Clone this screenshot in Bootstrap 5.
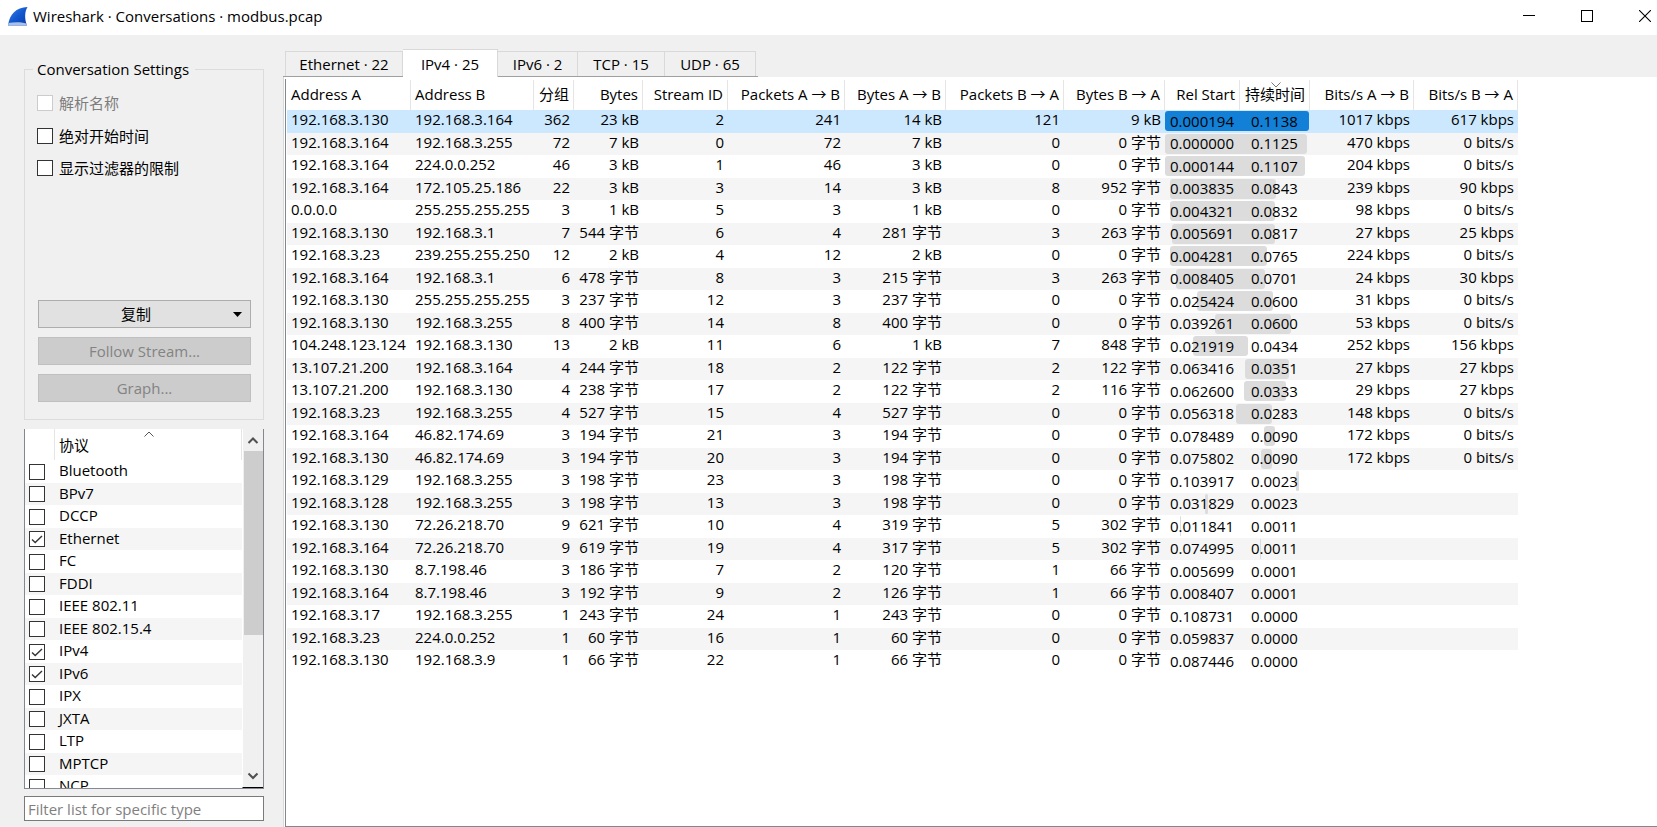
<!DOCTYPE html>
<html lang="zh-CN">
<head>
<meta charset="utf-8">
<meta name="viewport" content="width=device-width, initial-scale=1">
<title>Wireshark · Conversations · modbus.pcap</title>
<link href="https://cdn.jsdelivr.net/npm/bootstrap@5.3.0/dist/css/bootstrap.min.css" rel="stylesheet">
<style>
  body { font: 15px/20px "Open Sans", "Noto Sans CJK SC", sans-serif; color: #000; background: #f0f0f0; }

  /* title bar */
  .titlebar { height: 35px; padding-left: 8px; background: #fff; }
  .titlebar-text { margin-left: 5px; padding-bottom: 4px; }
  .win-btn { width: 24px; height: 24px; line-height: 0; border: 0; padding: 0; background: none; }
  .win-btns { gap: 34px; }

  /* sidebar */
  .main-area { min-height: 0; }
  .sidebar { width: 240px; margin: 22px 19px 6px 24px; }
  .settings { border: 1px solid #dcdcdc; padding: 0 12px 17px; }
  .settings legend { float: none; width: auto; margin: 0 0 0 -4px; padding: 0 6px 0 4px; font-size: 15px; line-height: 24px; }
  .settings-body { min-height: 321px; padding-top: 12px; }
  .settings label { height: 20px; margin-bottom: 12px; gap: 6px; }
  .settings label.off { color: #7d7d7d; margin-bottom: 13px; }
  .tick.form-check-input { width: 16px; height: 16px; margin: 0; border: 1px solid #333; border-radius: 0; background-color: #fff; display: block; flex: none; box-shadow: none; }
  .tick.form-check-input:checked { background-color: #fff; background-image: url("data:image/svg+xml,%3Csvg xmlns='http://www.w3.org/2000/svg' viewBox='0 0 14 14'%3E%3Cpath d='M2 7.5l3.2 3L12 4' fill='none' stroke='%23333' stroke-width='1.4'/%3E%3C/svg%3E"); }
  .tick.form-check-input:disabled { border-color: #ccc; opacity: 1; }
  .btn-flat { --bs-btn-font-size: 15px; --bs-btn-line-height: 20px; --bs-btn-padding-y: 3px; --bs-btn-border-radius: 0; --bs-btn-border-color: #adadad; --bs-btn-bg: #e1e1e1; --bs-btn-color: #000; --bs-btn-disabled-bg: #ccc; --bs-btn-disabled-border-color: #bfbfbf; --bs-btn-disabled-color: #838383; --bs-btn-disabled-opacity: 1; margin-left: 1px; width: 213px; }
  .btn-stack { gap: 9px; }

  /* protocol list */
  .protocols { margin-top: 9px; background: #fff; border: 1px solid #828790; border-top: 0; flex: 1 1 0; min-height: 0; }
  .proto-view { overflow: hidden; }
  .proto-table { width: 100%; border-collapse: separate; border-spacing: 0; }
  .proto-table th { height: 31px; padding: 6px 0 0 4px; font-weight: 400; vertical-align: top; border-right: 1px solid #e5e5e5; position: relative; }
  .proto-table td { padding: 0 0 0 4px; height: 22px; vertical-align: top; }
  .proto-table td:first-child { padding-top: 3px; width: 30px; }
  .proto-table tr:nth-child(odd) td { height: 23px; }
  .proto-table tr:nth-child(odd) td:first-child { padding-top: 4px; }
  .proto-table label { display: block; line-height: 20px; }
  .proto-table tbody tr:nth-child(even) { background: #f5f5f5; }
  .sort-mark { position: absolute; left: 50%; margin-left: -4px; top: 2px; }
  .vbar { width: 21px; padding-left: 1px; border-left: 1px solid #fff; border-bottom: 1px solid #000; background: #f0f0f0; }
  .vbar svg { display: block; }
  .vbar-thumb { height: 184px; background: #cdcdcd; }
  .filter-box.form-control { height: 25px; margin-top: 7px; padding: 0 3px; font-size: 15px; line-height: 20px; border: 1px solid #7a7a7a; border-radius: 0; color: #000; }
  .filter-box::placeholder { color: #7f7f7f; }

  /* tabs */
  .conv { margin-top: 14px; }
  .conv-tabs { display: grid; grid-template-columns: 118px 95px 80px 87px 91px; align-items: end; width: max-content; padding: 0 2px; border-bottom: 1px solid #a0a0a0; }
  .conv-tabs .nav-link { width: 100%; height: 25px; padding: 0; line-height: 24px; color: #000; border: 1px solid #d9d9d9; border-width: 1px 1px 0 0; border-radius: 0; background: #f0f0f0; margin: 0; }
  .conv-tabs li:first-child .nav-link { border-left-width: 1px; }
  .conv-tabs .nav-link.active { height: 28px; margin-bottom: -1px; color: #000; background: #fff; border-color: #d9d9d9; position: relative; }

  /* conversation table */
  .pane { background: #fff; border-left: 1px solid #d9d9d9; padding: 2px 0 0 1px; }
  .pane-view { border: 1px solid #828790; border-width: 0 0 1px 1px; padding: 1px 0 0 1px; overflow: hidden; }
  .conv-table { width: 1231px; table-layout: fixed; border-collapse: separate; border-spacing: 0; white-space: nowrap; }
  .conv-table th { height: 30px; padding: 0 4px 0 0; font-weight: 400; line-height: 28px; vertical-align: top; text-align: right; border-right: 1px solid #e5e5e5; position: relative; }
  .conv-table td { height: 22px; padding: 0 4px 0 0; line-height: 19px; vertical-align: top; text-align: right; }
  .conv-table tr:nth-child(odd) td { height: 23px; }
  .conv-table th:nth-child(-n+2), .conv-table td:nth-child(-n+2) { text-align: left; padding: 0 0 0 4px; }
  .conv-table tbody tr:nth-child(even) { background: #f5f5f5; }
  .conv-table tbody tr.chosen { background: #cce8ff; }
  .conv-table td.t-start, .conv-table td.t-span { position: relative; line-height: 20px; text-align: left; padding: 0 0 0 5px; }
  .conv-table tr:nth-child(odd) td.t-start, .conv-table tr:nth-child(odd) td.t-span { line-height: 22px; }
  .conv-table td.t-span { padding-left: 11px; }
  .t-num { position: relative; z-index: 2; }
  .span-bar { position: absolute; z-index: 1; top: 1px; height: 20px; border-radius: 3px; background: #dcdcdc; }
  .chosen .span-bar { background: #1380d8; }
</style>
</head>
<body>
<div class="vh-100 d-flex flex-column overflow-hidden">
  <header class="titlebar d-flex align-items-center flex-shrink-0">
    <svg width="20" height="20" viewBox="0 0 20 20" class="mb-1" aria-hidden="true">
      <defs><linearGradient id="fin" x1="0" y1="0" x2="1" y2="1"><stop offset="0" stop-color="#3b86e8"/><stop offset=".5" stop-color="#1258cf"/><stop offset="1" stop-color="#0a3ba6"/></linearGradient></defs>
      <path d="M0 19.500C1.500 8 8 1.500 19.500 1C16.500 6 16.500 13 19 19.500Z" fill="url(#fin)"/>
      <path d="M0 19.500L.6 17C6 15.800 13 15.800 18.400 17.500L19 19.500Z" fill="#a9c1ea"/>
    </svg>
    <span class="titlebar-text me-auto">Wireshark · Conversations · modbus.pcap</span>
    <div class="win-btns d-flex pb-1">
      <button class="win-btn" type="button" aria-label="Minimize"><svg width="12" height="12"><path d="M0 5.500H12" stroke="#000"/></svg></button>
      <button class="win-btn" type="button" aria-label="Maximize"><svg width="12" height="12"><rect x=".5" y=".5" width="11" height="11" fill="none" stroke="#000"/></svg></button>
      <button class="win-btn" type="button" aria-label="Close"><svg width="12" height="12"><path d="M0 0L12 12M12 0L0 12" stroke="#000" stroke-width="1.100"/></svg></button>
    </div>
  </header>

  <main class="main-area d-flex flex-grow-1">
    <aside class="sidebar d-flex flex-column flex-shrink-0">
      <fieldset class="settings">
        <legend>Conversation Settings</legend>
        <div class="settings-body d-flex flex-column">
          <label class="off d-flex align-items-center"><input class="tick form-check-input" type="checkbox" disabled>解析名称</label>
          <label class="d-flex align-items-center"><input class="tick form-check-input" type="checkbox">绝对开始时间</label>
          <label class="d-flex align-items-center"><input class="tick form-check-input" type="checkbox">显示过滤器的限制</label>
          <div class="btn-stack d-flex flex-column mt-auto">
            <button type="button" class="btn btn-flat d-flex align-items-center px-2"><span class="flex-grow-1 pe-2">复制</span><svg width="9" height="5"><path d="M0 0H9L4.500 5Z"/></svg></button>
            <button type="button" class="btn btn-flat" disabled>Follow Stream...</button>
            <button type="button" class="btn btn-flat" disabled>Graph...</button>
          </div>
        </div>
      </fieldset>

      <div class="protocols d-flex">
        <div class="proto-view flex-grow-1">
          <table class="proto-table">
            <thead><tr><th></th><th>协议<svg class="sort-mark" width="10" height="6"><path d="M.5 5.500L5 1L9.500 5.500" fill="none" stroke="#555"/></svg></th></tr></thead>
            <tbody id="protoRows"></tbody>
          </table>
        </div>
        <div class="vbar d-flex flex-column flex-shrink-0" aria-hidden="true">
          <svg width="19" height="22"><path d="M4.500 14L9 9.500L13.500 14" fill="none" stroke="#505050" stroke-width="2"/></svg>
          <div class="vbar-thumb"></div>
          <svg class="mt-auto" width="19" height="18"><path d="M4.500 4.500L9 9L13.500 4.500" fill="none" stroke="#505050" stroke-width="2"/></svg>
        </div>
      </div>
      <input class="filter-box form-control flex-shrink-0" type="text" aria-label="Filter protocols" placeholder="Filter list for specific type">
    </aside>

    <section class="conv d-flex flex-column flex-grow-1 overflow-hidden">
      <ul class="conv-tabs nav flex-shrink-0" role="tablist">
        <li role="presentation"><button class="nav-link" type="button" role="tab">Ethernet · 22</button></li>
        <li role="presentation"><button class="nav-link active" type="button" role="tab" aria-selected="true">IPv4 · 25</button></li>
        <li role="presentation"><button class="nav-link" type="button" role="tab">IPv6 · 2</button></li>
        <li role="presentation"><button class="nav-link" type="button" role="tab">TCP · 15</button></li>
        <li role="presentation"><button class="nav-link" type="button" role="tab">UDP · 65</button></li>
      </ul>
      <div class="pane d-flex flex-grow-1 overflow-hidden">
        <div class="pane-view flex-grow-1">
          <table class="conv-table">
            <colgroup>
              <col width="124"><col width="123"><col width="40"><col width="69"><col width="85"><col width="117"><col width="101">
              <col width="118"><col width="101"><col width="75"><col width="70"><col width="104"><col width="104">
            </colgroup>
            <thead>
              <tr>
                <th>Address A</th><th>Address B</th><th>分组</th><th>Bytes</th><th>Stream ID</th>
                <th>Packets A → B</th><th>Bytes A → B</th><th>Packets B → A</th><th>Bytes B → A</th>
                <th>Rel Start</th><th>持续时间<svg class="sort-mark" width="10" height="6"><path d="M.5 .5L5 5L9.500 .5" fill="none" stroke="#777"/></svg></th>
                <th>Bits/s A → B</th><th>Bits/s B → A</th>
              </tr>
            </thead>
            <tbody id="convRows"></tbody>
          </table>
        </div>
      </div>
    </section>
  </main>
</div>

<script src="https://cdn.jsdelivr.net/npm/bootstrap@5.3.0/dist/js/bootstrap.bundle.min.js"></script>
<script>
  const protocols = ['Bluetooth', 'BPv7', 'DCCP', 'Ethernet', 'FC', 'FDDI', 'IEEE 802.11', 'IEEE 802.15.4', 'IPv4', 'IPv6', 'IPX', 'JXTA', 'LTP', 'MPTCP', 'NCP'];
  const enabled = ['Ethernet', 'IPv4', 'IPv6'];
  document.getElementById('protoRows').innerHTML = protocols.map((p, i) =>
    `<tr><td><input class="tick form-check-input" type="checkbox" id="p${i}"${enabled.includes(p) ? ' checked' : ''}></td><td><label for="p${i}">${p}</label></td></tr>`).join('');

  // A | B | packets | bytes | stream | packets A-B | bytes A-B | packets B-A | bytes B-A | start | duration | bits A-B | bits B-A
  const conversations = `192.168.3.130|192.168.3.164|362|23 kB|2|241|14 kB|121|9 kB|0.000194|0.1138|1017 kbps|617 kbps
192.168.3.164|192.168.3.255|72|7 kB|0|72|7 kB|0|0 字节|0.000000|0.1125|470 kbps|0 bits/s
192.168.3.164|224.0.0.252|46|3 kB|1|46|3 kB|0|0 字节|0.000144|0.1107|204 kbps|0 bits/s
192.168.3.164|172.105.25.186|22|3 kB|3|14|3 kB|8|952 字节|0.003835|0.0843|239 kbps|90 kbps
0.0.0.0|255.255.255.255|3|1 kB|5|3|1 kB|0|0 字节|0.004321|0.0832|98 kbps|0 bits/s
192.168.3.130|192.168.3.1|7|544 字节|6|4|281 字节|3|263 字节|0.005691|0.0817|27 kbps|25 kbps
192.168.3.23|239.255.255.250|12|2 kB|4|12|2 kB|0|0 字节|0.004281|0.0765|224 kbps|0 bits/s
192.168.3.164|192.168.3.1|6|478 字节|8|3|215 字节|3|263 字节|0.008405|0.0701|24 kbps|30 kbps
192.168.3.130|255.255.255.255|3|237 字节|12|3|237 字节|0|0 字节|0.025424|0.0600|31 kbps|0 bits/s
192.168.3.130|192.168.3.255|8|400 字节|14|8|400 字节|0|0 字节|0.039261|0.0600|53 kbps|0 bits/s
104.248.123.124|192.168.3.130|13|2 kB|11|6|1 kB|7|848 字节|0.021919|0.0434|252 kbps|156 kbps
13.107.21.200|192.168.3.164|4|244 字节|18|2|122 字节|2|122 字节|0.063416|0.0351|27 kbps|27 kbps
13.107.21.200|192.168.3.130|4|238 字节|17|2|122 字节|2|116 字节|0.062600|0.0333|29 kbps|27 kbps
192.168.3.23|192.168.3.255|4|527 字节|15|4|527 字节|0|0 字节|0.056318|0.0283|148 kbps|0 bits/s
192.168.3.164|46.82.174.69|3|194 字节|21|3|194 字节|0|0 字节|0.078489|0.0090|172 kbps|0 bits/s
192.168.3.130|46.82.174.69|3|194 字节|20|3|194 字节|0|0 字节|0.075802|0.0090|172 kbps|0 bits/s
192.168.3.129|192.168.3.255|3|198 字节|23|3|198 字节|0|0 字节|0.103917|0.0023||
192.168.3.128|192.168.3.255|3|198 字节|13|3|198 字节|0|0 字节|0.031829|0.0023||
192.168.3.130|72.26.218.70|9|621 字节|10|4|319 字节|5|302 字节|0.011841|0.0011||
192.168.3.164|72.26.218.70|9|619 字节|19|4|317 字节|5|302 字节|0.074995|0.0011||
192.168.3.130|8.7.198.46|3|186 字节|7|2|120 字节|1|66 字节|0.005699|0.0001||
192.168.3.164|8.7.198.46|3|192 字节|9|2|126 字节|1|66 字节|0.008407|0.0001||
192.168.3.17|192.168.3.255|1|243 字节|24|1|243 字节|0|0 字节|0.108731|0.0000||
192.168.3.23|224.0.0.252|1|60 字节|16|1|60 字节|0|0 字节|0.059837|0.0000||
192.168.3.130|192.168.3.9|1|66 字节|22|1|66 字节|0|0 字节|0.087446|0.0000||`;

  const pxPerSecond = 1263; // the time line covers the start and duration columns
  document.getElementById('convRows').innerHTML = conversations.split('\n').map((line, row) => {
    const cells = line.split('|').map((v, i, all) => {
      if (i === 9) {
        const left = Math.round(v * pxPerSecond), width = Math.round(all[10] * pxPerSecond);
        const bar = width ? `<span class="span-bar" style="left:${left}px;width:${width}px"></span>` : '';
        return `<td class="t-start">${bar}<span class="t-num">${v}</span></td>`;
      }
      if (i === 10) return `<td class="t-span"><span class="t-num">${v}</span></td>`;
      return `<td>${v}</td>`;
    });
    return `<tr${row === 0 ? ' class="chosen"' : ''}>${cells.join('')}</tr>`;
  }).join('');
</script>
</body>
</html>
